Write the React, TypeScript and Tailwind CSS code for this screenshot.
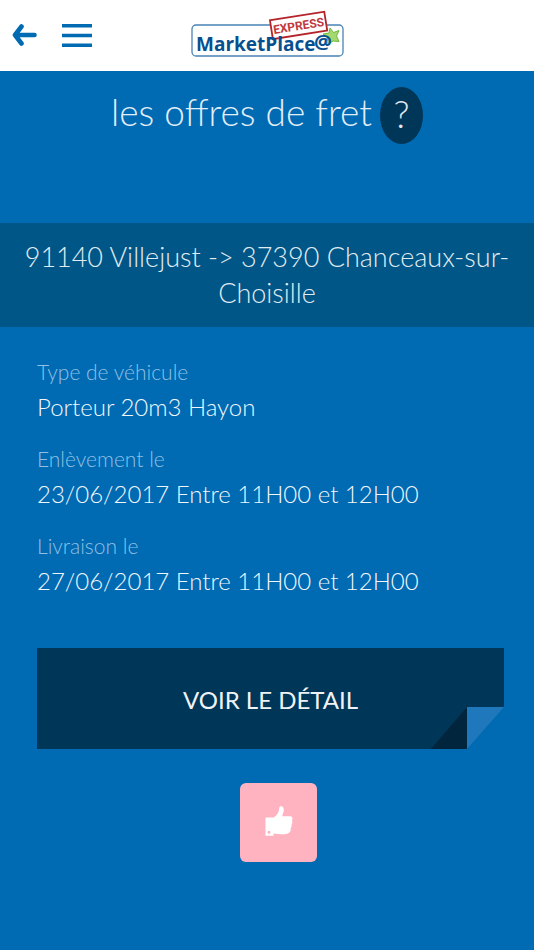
const DETAILS = [
  { label: 'Type de véhicule', value: 'Porteur 20m3 Hayon' },
  { label: 'Enlèvement le', value: '23/06/2017 Entre 11H00 et 12H00' },
  { label: 'Livraison le', value: '27/06/2017 Entre 11H00 et 12H00' },
];

const Logo = () => (
  <svg viewBox="0 0 156 50" className="w-[156px] h-[50px] overflow-visible" role="img" aria-label="MarketPlace@ Express">
    <rect x="3" y="14" width="151" height="31" rx="4" fill="#fff" stroke="#4a83b5" strokeWidth="1.300" />
    <g transform="rotate(-9 109 14)">
      <rect x="82" y="5" width="55" height="19" fill="#fff" stroke="#b5242a" strokeWidth="1.800" />
      <text x="109.500" y="19" textAnchor="middle" fontSize="12" fontWeight="700" fill="#c0393c" fontFamily="Roboto, sans-serif">
        EXPRESS
      </text>
    </g>
    <path d="M141 17 L144.500 21.500 L150 19.500 L147.500 25 L150 30.500 L144 30 L139 33 L138.500 27 L134 23 L140 22 Z" fill="#a5d86f" stroke="#6dbb3c" strokeWidth="1" />
    <text x="7" y="40" fontSize="19" fontWeight="700" fill="#07508f" fontFamily="'Open Sans', sans-serif">
      MarketPlace
    </text>
    <text x="125" y="38" fontSize="20" fontWeight="700" fill="#07508f" fontFamily="'Open Sans', sans-serif">
      @
    </text>
  </svg>
);

const Header = () => (
  <header className="grid grid-cols-[1fr_auto_1fr] items-center h-[71px] bg-white px-3">
    <div className="flex items-center gap-6">
      <button type="button" aria-label="Retour" className="text-[#006ab3]">
        <svg viewBox="0 0 26 24" className="w-[26px] h-6" fill="none" stroke="currentColor" strokeWidth="4.600" strokeLinecap="round" strokeLinejoin="round">
          <path d="M9.500 2.500 L3 11 L9.500 19.500 M3.500 11 H22.500" />
        </svg>
      </button>
      <button type="button" aria-label="Menu" className="text-[#006ab3]">
        <svg viewBox="0 0 30 24" className="w-[30px] h-6" fill="currentColor">
          <path d="M0 0h30v3.500H0z M0 9.800h30v3.500H0z M0 19.600h30v3.500H0z" />
        </svg>
      </button>
    </div>
    <Logo />
  </header>
);

const ThumbIcon = () => (
  <svg viewBox="0 0 28 30" className="w-7 h-[30px]" aria-hidden="true">
    <path
      fill="#fff"
      fillRule="evenodd"
      d="M0.500 11.500H8.500C10.500 10.500 12.500 8 13.500 6C14.200 4.500 13.800 0.500 15.500 0.300C18 0 19.200 2.500 18.700 5C18.400 7 17.300 8.500 17.300 10.300H25C27.500 10.300 28 12.500 27 14.500C27.700 16 27.300 17.500 26.500 18.500C27 20 26.500 21.500 25.600 22.300C26.300 25.500 24.500 27.500 21 28C17 28.500 13 28.300 8.500 27.500V29.800H0.500Z M4 24.700A1.500 1.500 0 1 0 4 27.700A1.500 1.500 0 1 0 4 24.700Z"
    />
  </svg>
);

export default function App() {
  return (
    <div className="min-h-screen bg-[#006ab3] font-['Lato',sans-serif]">
      <Header />

      <main>
        <div className="flex items-center justify-center gap-2 pt-4">
          <h1 className="pb-2 text-[37px] leading-[48px] font-light text-[#e2eef7]">les offres de fret</h1>
          <button type="button" aria-label="Aide" className="w-[43px] h-[57px] rounded-[50%] bg-[#003658] pb-1 text-[37px] leading-[53px] font-light text-[#e2eaef]">
            ?
          </button>
        </div>

        <h2 className="mt-[79px] bg-[#005686] p-4 text-center text-[27px] leading-9 font-light text-[#e0ecf3]">
          91140 Villejust -&gt; 37390 Chanceaux-sur-Choisille
        </h2>

        <section className="pl-[37px] pr-[30px] pt-[27px]">
          <dl className="space-y-[17px]">
            {DETAILS.map((item) => (
              <div key={item.label}>
                <dt className="text-[21px] leading-[35px] font-light text-[#8fc0e3]">{item.label}</dt>
                <dd className="text-[24px] leading-[35px] font-light text-[#f0f7fc]">{item.value}</dd>
              </div>
            ))}
          </dl>

          <button type="button" className="relative mt-[50px] block h-[101px] w-full bg-[#003658] pt-0.5 text-[24px] text-[#f0f3f5]">
            VOIR LE DÉTAIL
            {/* coin replié */}
            <svg viewBox="0 0 73 42" className="absolute bottom-0 right-0 w-[73px] h-[42px]" aria-hidden="true">
              <path d="M36 0V42H0Z" fill="#00253c" />
              <path d="M36 0H73V42H36Z" fill="#006ab3" />
              <path d="M36 0H73L36 42Z" fill="#1f77bc" />
            </svg>
          </button>

          <div className="flex justify-center pl-4 pt-[34px]">
            <button type="button" aria-label="J'aime" className="flex h-[79px] w-[77px] items-center justify-center rounded-md bg-[#ffb3c0] pb-1">
              <ThumbIcon />
            </button>
          </div>
        </section>
      </main>
    </div>
  );
}
